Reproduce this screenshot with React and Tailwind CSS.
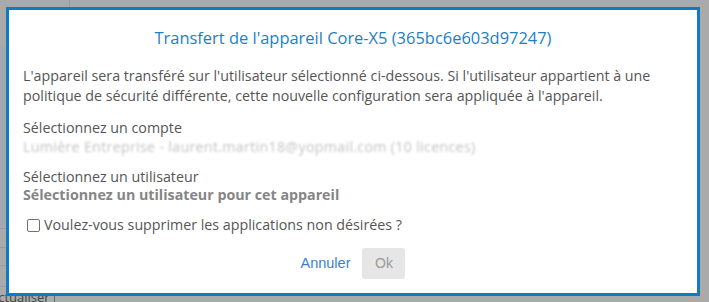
import { useState } from "react";

const App = () => {
  const [removeApps, setRemoveApps] = useState(false);

  return (
    <div
      className="relative w-[709px] h-[302px] overflow-hidden bg-[#aaaaaa] pl-[6px] pt-[7px]"
      style={{ fontFamily: '"Open Sans", "Liberation Sans", sans-serif' }}
    >
      {/* page behind the overlay */}
      <div className="absolute inset-0">
        <div className="absolute left-[69px] top-0 h-[46px] w-px bg-[#9a9a9a]" />
        <div className="absolute left-0 top-[46px] w-[7px] h-[180px] bg-[#a3a8ad]" />
        <div className="absolute left-0 top-[228px] w-[7px] h-px bg-[#8aa0b8]" />
        <div className="absolute left-0 top-[247px] w-[7px] h-px bg-[#8aa0b8]" />
        <div className="absolute left-0 top-[265px] w-[7px] h-px bg-[#8aa0b8]" />
        <div className="absolute left-0 top-[286px] w-[7px] h-px bg-[#8aa0b8]" />
        <div className="absolute left-[-10px] top-[289px] h-[16px] pr-1 border-r border-[#666] text-[13px] leading-[16px] text-[#444]">
          Actualiser
        </div>
      </div>

      {/* dialog */}
      <div className="relative w-[694px] h-[289px] bg-white border-[3px] border-[#0f7bc3] flex flex-col">
        <h2 className="text-center text-[16.45px] leading-[22px] text-[#1c7fc4] mt-[17px]">
          Transfert de l'appareil Core-X5 (365bc6e603d97247)
        </h2>

        <div className="px-[14px] mt-[17px] text-[14.25px] text-[#555]">
          <p className="leading-[20px]">
            L'appareil sera transféré sur l'utilisateur sélectionné ci-dessous. Si l'utilisateur appartient à une
            politique de sécurité différente, cette nouvelle configuration sera appliquée à l'appareil.
          </p>

          <div className="mt-[12px] leading-[20px]">Sélectionnez un compte</div>
          <div className="leading-[18px] text-[#c4c4c4] blur-[1.3px] tracking-[0.3px]">
            Lumière Entreprise - laurent.martin18@yopmail.com (10 licences)
          </div>

          <div className="mt-[11px] leading-[19px]">Sélectionnez un utilisateur</div>
          <div className="leading-[17px] font-bold text-[#858585]">
            Sélectionnez un utilisateur pour cet appareil
          </div>

          <label className="mt-[12px] ml-[4px] flex items-center gap-[4px] leading-[20px] cursor-pointer">
            <input
              type="checkbox"
              checked={removeApps}
              onChange={() => setRemoveApps(!removeApps)}
              className="appearance-none w-[13px] h-[13px] border border-[#6f6f6f] rounded-[2px] bg-white"
            />
            <span>Voulez-vous supprimer les applications non désirées ?</span>
          </label>
        </div>

        <div className="flex justify-center items-center gap-[12px] mt-[13px]">
          <button className="text-[14.5px] text-[#3a7fd5]" style={{ fontFamily: '"Liberation Sans", sans-serif' }}>
            Annuler
          </button>
          <button
            disabled
            className="w-[43px] h-[31px] rounded-[3px] bg-[#e6e6e6] text-[14px] text-[#9a9a9a]"
            style={{ fontFamily: '"Liberation Sans", sans-serif' }}
          >
            Ok
          </button>
        </div>
      </div>
    </div>
  );
};

export default App;
